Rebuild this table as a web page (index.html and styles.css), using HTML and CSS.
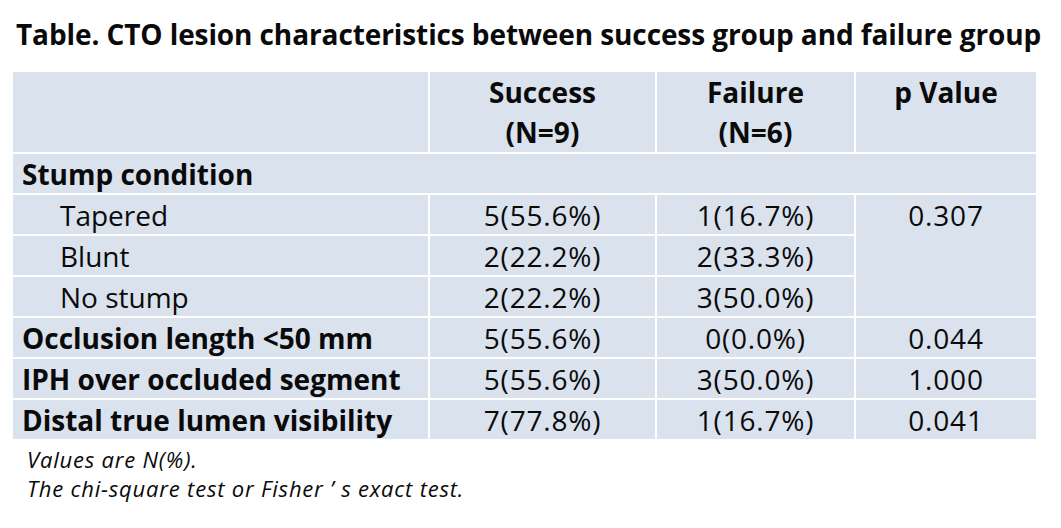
FILE: index.html
```html
<!DOCTYPE html>
<html>
<head>
<meta charset="utf-8">
<link rel="stylesheet" href="styles.css">
</head>
<body>
<div class="page">
  <div class="title">Table. CTO lesion characteristics between success group and failure group</div>
  <table class="data">
    <colgroup>
      <col class="c1"><col class="c2"><col class="c3"><col class="c4">
    </colgroup>
    <thead>
      <tr class="head">
        <th></th>
        <th>Success<br>(N=9)</th>
        <th>Failure<br>(N=6)</th>
        <th>p Value</th>
      </tr>
    </thead>
    <tbody>
      <tr><td class="label bold" colspan="4">Stump condition</td></tr>
      <tr><td class="label sub">Tapered</td><td class="num">5(55.6%)</td><td class="num">1(16.7%)</td><td class="num pv" rowspan="3">0.307</td></tr>
      <tr><td class="label sub">Blunt</td><td class="num">2(22.2%)</td><td class="num">2(33.3%)</td></tr>
      <tr><td class="label sub">No stump</td><td class="num">2(22.2%)</td><td class="num">3(50.0%)</td></tr>
      <tr><td class="label bold">Occlusion length &lt;50 mm</td><td class="num">5(55.6%)</td><td class="num">0(0.0%)</td><td class="num">0.044</td></tr>
      <tr><td class="label bold">IPH over occluded segment</td><td class="num">5(55.6%)</td><td class="num">3(50.0%)</td><td class="num">1.000</td></tr>
      <tr><td class="label bold">Distal true lumen visibility</td><td class="num">7(77.8%)</td><td class="num">1(16.7%)</td><td class="num">0.041</td></tr>
    </tbody>
  </table>
  <div class="notes">
    <div class="note">Values are N(%).</div>
    <div class="note">The chi-square test or Fisher ’ s exact test.</div>
  </div>
</div>
</body>
</html>
```
FILE: styles.css
```css
html, body {
  margin: 0;
  padding: 0;
  background: #ffffff;
}
.page {
  width: 1061px;
  height: 528px;
  font-family: "Open Sans", "Liberation Sans", sans-serif;
  color: #0a0a0a;
  padding: 0 0 0 13px;
  box-sizing: border-box;
}
.title {
  font-weight: 700;
  font-size: 28px;
  line-height: 34px;
  padding: 17px 0 0 3px;
  height: 58px;
  box-sizing: border-box;
  white-space: nowrap;
  letter-spacing: -0.1px;
}
.data {
  margin-top: 14px;
  border-collapse: collapse;
  width: 1024px;
  table-layout: fixed;
  font-size: 28px;
}
.c1 { width: 416px; }
.c2 { width: 227px; }
.c3 { width: 199px; }
.c4 { width: 182px; }
.data th, .data td {
  background: #dae2ee;
  border: 2px solid #ffffff;
  padding: 0;
  text-align: center;
  vertical-align: middle;
  height: 39px;
  line-height: 36px;
  font-weight: 400;
  white-space: nowrap;
}
.data tr.head th {
  font-weight: 700;
  vertical-align: top;
  height: 77px;
  line-height: 40px;
  padding-top: 0;
}
.data tr:first-child th { border-top: 0; }
.data th:first-child, .data td:first-child { border-left: 0; }
.data td.num { letter-spacing: 0.8px; }
.data td.label {
  text-align: left;
  padding-left: 9px;
}
.data td.bold { font-weight: 700; }
.data td.sub { padding-left: 47px; }
.data td.pv { vertical-align: top; padding-top: 2px; }
.notes {
  font-style: italic;
  font-size: 22px;
  letter-spacing: 0.8px;
  padding: 3px 0 0 14px;
}
.note {
  line-height: 30px;
  height: 29px;
  white-space: nowrap;
}
```
